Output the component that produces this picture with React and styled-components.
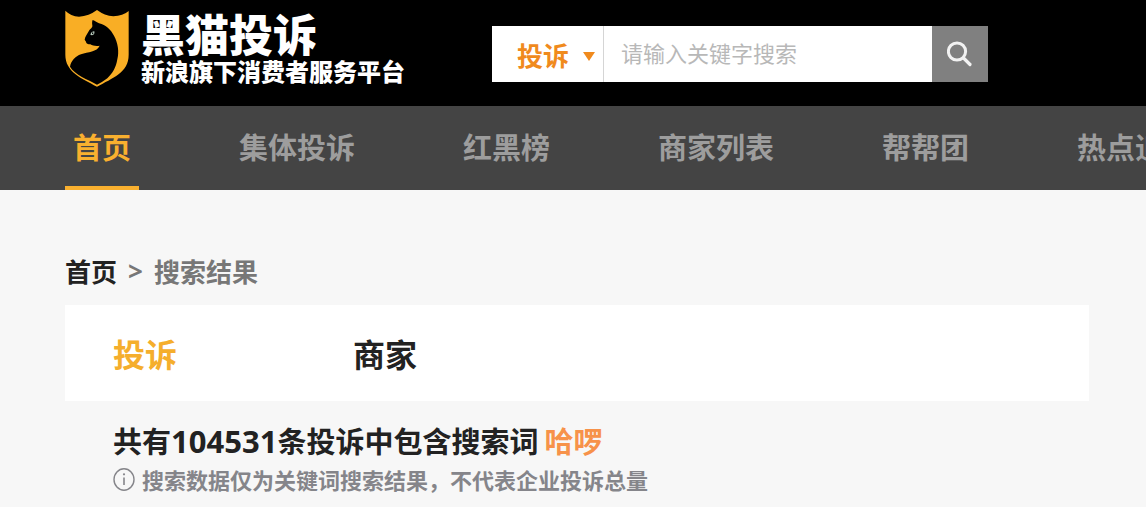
import React from "react";
import styled, { createGlobalStyle } from "styled-components";

const GlobalStyle = createGlobalStyle`
  * { box-sizing: border-box; }
  body {
    margin: 0;
    background: #f7f7f7;
    color: #222;
    font-family: "Noto Sans CJK SC", "Noto Sans", sans-serif;
    overflow-x: hidden;
  }
  button, input, select { font-family: inherit; }
  a { color: inherit; text-decoration: none; }
`;

const Header = styled.header`
  display: flex;
  align-items: flex-start;
  gap: 87px;
  min-height: 106px;
  padding: 10px 65px 0;
  background: #000;
`;

const Brand = styled.a`
  display: flex;
  flex-shrink: 0;
  gap: 12px;
  color: #fff;
`;

const Shield = styled.svg`
  width: 64px;
  height: 77px;
`;

const BrandText = styled.span`
  display: flex;
  flex-direction: column;
  font-weight: 900;
  white-space: nowrap;
`;

const BrandName = styled.span`
  font-size: 44px;
  line-height: 46px;
`;

const Tagline = styled.span`
  font-size: 24px;
  line-height: 30px;
`;

const Search = styled.form`
  display: flex;
  flex: 0 1 496px;
  min-width: 0;
  height: 56px;
  margin-top: 16px;
  background: #fff;
`;

const Scope = styled.label`
  display: flex;
  align-items: center;
  flex-shrink: 0;
  width: 112px;
  padding: 0 8px 0 25px;
  border-right: 1px solid #d5d5d5;
`;

const ScopeSelect = styled.select`
  flex: 1;
  min-width: 0;
  height: 56px;
  padding: 0;
  border: 0;
  outline: 0;
  appearance: none;
  background: transparent;
  color: #f08a1d;
  font-size: 26px;
  font-weight: 700;
`;

const Caret = styled.svg`
  width: 12px;
  height: 9px;
  margin-top: 4px;
  fill: #f08a1d;
  pointer-events: none;
`;

const Keyword = styled.input`
  flex: 1;
  min-width: 0;
  padding: 0 17px 4px;
  border: 0;
  outline: 0;
  background: transparent;
  color: #222;
  font-size: 22px;
  &::placeholder { color: #b8b8b8; opacity: 1; }
`;

const SearchButton = styled.button`
  display: grid;
  place-items: center;
  flex-shrink: 0;
  width: 56px;
  padding: 0;
  border: 0;
  background: #808080;
  color: #f2f2f2;
  svg { width: 26px; height: 26px; }
`;

const Nav = styled.nav`
  display: flex;
  gap: 92px;
  height: 84px;
  padding-left: 65px;
  overflow: hidden;
  background: #444;
`;

const NavLink = styled.a`
  flex-shrink: 0;
  padding: 0 8px;
  border-bottom: 4px solid ${(p) => (p.$active ? "#f9b02f" : "transparent")};
  color: ${(p) => (p.$active ? "#f9b02f" : "#9d9d9d")};
  font-size: 29px;
  font-weight: 700;
  line-height: 80px;
  white-space: nowrap;
`;

const Main = styled.main`
  padding: 61px 57px 8px 65px;
`;

const Breadcrumb = styled.nav`
  display: flex;
  gap: 11px;
  margin-bottom: 14px;
  color: #777;
  font-size: 26px;
  font-weight: 700;
  line-height: 40px;
`;

const Crumb = styled.a`
  color: #222;
`;

const Separator = styled.span`
  font-family: "Noto Sans", sans-serif;
`;

const Tabs = styled.div`
  display: flex;
  gap: 176px;
  padding: 0 48px;
  background: #fff;
`;

const Tab = styled.button`
  padding: 0;
  border: 0;
  background: transparent;
  color: ${(p) => (p.$active ? "#f5ae2c" : "#222")};
  font-size: 32px;
  font-weight: 700;
  line-height: 96px;
`;

const Summary = styled.section`
  padding: 19px 48px 0;
`;

const Total = styled.h1`
  margin: 0;
  font-size: 29px;
  font-weight: 700;
  line-height: 40px;
`;

const Count = styled.span`
  font-family: "Noto Sans", sans-serif;
  font-size: 31px;
`;

const Term = styled.span`
  margin-left: 6px;
  color: #f7924a;
`;

const Note = styled.p`
  display: flex;
  align-items: center;
  gap: 7px;
  margin: 0;
  color: #85858a;
  font-size: 22px;
  font-weight: 700;
  line-height: 36px;
  svg { flex-shrink: 0; width: 22px; height: 23px; }
`;

const navItems = ["首页", "集体投诉", "红黑榜", "商家列表", "帮帮团", "热点追踪"];

function CatShield() {
  return (
    <Shield viewBox="15 14 192 231" aria-hidden="true">
      <path
        fill="#f9ae25"
        d="M16 16Q32 32 57 34Q87 32 111 14Q134 31 160 33Q189 32 206 17V148C206 202 157 218 111 244C64 218 16 200 16 148Z"
      />
      <path
        fill="#000"
        d="M98 44C106 47 111 51 117 54C138 59 152 73 162 91C174 113 178 139 172 162C168 186 158 204 142 219Q128 230 111 238C83 222 45 209 30 184C33 167 46 153 63 147C84 139 111 140 119 121C108 123 98 121 91 117C84 116 78 115 78 109L74 103C75 94 81 86 87 76C91 70 98 68 97 60C96 54 96 48 98 44Z"
      />
      <path fill="#b9cdbf" d="M91 87Q95 77 103 78Q105 88 96 90Q92 90 91 87Z" />
      <ellipse cx="98" cy="84" rx="2" ry="3" fill="#000" />
    </Shield>
  );
}

export default function App() {
  return (
    <>
      <GlobalStyle />
      <Header>
        <Brand href="#">
          <CatShield />
          <BrandText>
            <BrandName>黑猫投诉</BrandName>
            <Tagline>新浪旗下消费者服务平台</Tagline>
          </BrandText>
        </Brand>
        <Search onSubmit={(e) => e.preventDefault()}>
          <Scope>
            <ScopeSelect aria-label="搜索类型" defaultValue="投诉">
              <option>投诉</option>
              <option>商家</option>
            </ScopeSelect>
            <Caret viewBox="0 0 12 9" aria-hidden="true">
              <path d="M0 0H12L6 9Z" />
            </Caret>
          </Scope>
          <Keyword type="text" aria-label="关键字" placeholder="请输入关键字搜索" />
          <SearchButton type="submit" aria-label="搜索">
            <svg viewBox="0 0 26 26" fill="none" stroke="currentColor" strokeLinecap="round">
              <circle cx="10" cy="10.5" r="8.6" strokeWidth="3" />
              <path d="M16.5 17L23 23.5" strokeWidth="3.2" />
            </svg>
          </SearchButton>
        </Search>
      </Header>
      <Nav>
        {navItems.map((item, i) => (
          <NavLink key={item} href="#" $active={i === 0}>
            {item}
          </NavLink>
        ))}
      </Nav>
      <Main>
        <Breadcrumb>
          <Crumb href="#">首页</Crumb>
          <Separator>&gt;</Separator>
          <span>搜索结果</span>
        </Breadcrumb>
        <Tabs>
          <Tab type="button" $active>投诉</Tab>
          <Tab type="button">商家</Tab>
        </Tabs>
        <Summary>
          <Total>
            共有<Count>104531</Count>条投诉中包含搜索词<Term>哈啰</Term>
          </Total>
          <Note>
            <svg viewBox="0 0 22 23" fill="none" stroke="currentColor" aria-hidden="true">
              <ellipse cx="11" cy="11.5" rx="10" ry="10.7" strokeWidth="1.4" />
              <path d="M11 9.5V17" strokeWidth="1.6" />
              <circle cx="11" cy="6.3" r="1.1" fill="currentColor" stroke="none" />
            </svg>
            <span>搜索数据仅为关键词搜索结果，不代表企业投诉总量</span>
          </Note>
        </Summary>
      </Main>
    </>
  );
}
